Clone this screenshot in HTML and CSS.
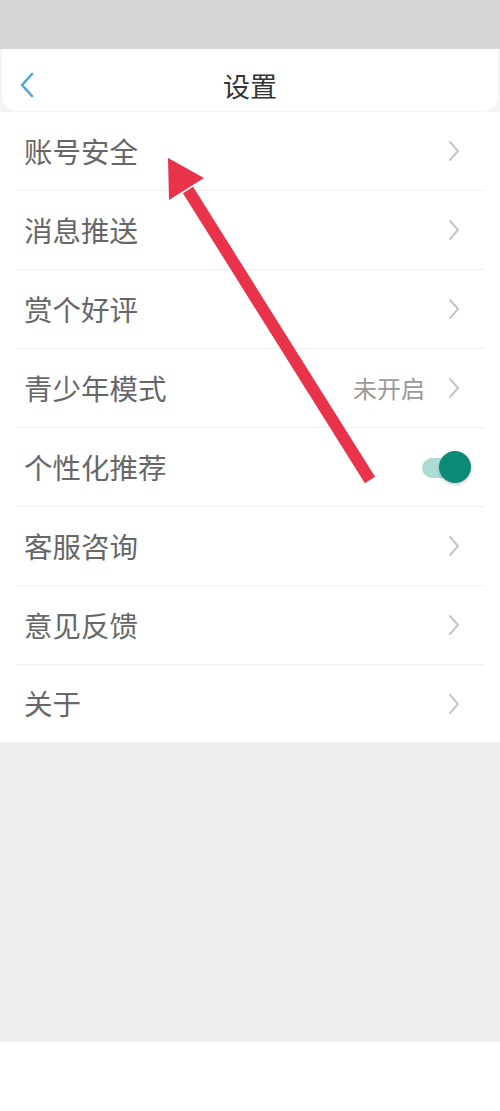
FILE: index.html
```html
<!DOCTYPE html>
<html lang="zh-CN">
<head>
<meta charset="utf-8">
<title>设置</title>
<link rel="stylesheet" href="styles.css">
</head>
<body>
<div class="page">
  <div class="status"></div>
  <div class="top-wrap">
    <header class="header">
      <div class="back">
        <svg width="16" height="26" viewBox="0 0 16 26"><polyline points="13,2 3,13 13,24" fill="none" stroke="#4ea6d6" stroke-width="2.6" stroke-linecap="round" stroke-linejoin="round"/></svg>
      </div>
      <div class="title">设置</div>
      <div></div>
    </header>
  </div>
  <ul class="list">
    <li class="row"><span class="label">账号安全</span><span class="right"><svg class="chev" width="14" height="22" viewBox="0 0 14 22"><polyline points="3,2 11,11 3,20" fill="none" stroke="#c6c6c6" stroke-width="2" stroke-linecap="round" stroke-linejoin="round"/></svg></span></li>
    <li class="row"><span class="label">消息推送</span><span class="right"><svg class="chev" width="14" height="22" viewBox="0 0 14 22"><polyline points="3,2 11,11 3,20" fill="none" stroke="#c6c6c6" stroke-width="2" stroke-linecap="round" stroke-linejoin="round"/></svg></span></li>
    <li class="row"><span class="label">赏个好评</span><span class="right"><svg class="chev" width="14" height="22" viewBox="0 0 14 22"><polyline points="3,2 11,11 3,20" fill="none" stroke="#c6c6c6" stroke-width="2" stroke-linecap="round" stroke-linejoin="round"/></svg></span></li>
    <li class="row"><span class="label">青少年模式</span><span class="right"><span class="value">未开启</span><svg class="chev" width="14" height="22" viewBox="0 0 14 22"><polyline points="3,2 11,11 3,20" fill="none" stroke="#c6c6c6" stroke-width="2" stroke-linecap="round" stroke-linejoin="round"/></svg></span></li>
    <li class="row"><span class="label">个性化推荐</span><span class="right"><span class="toggle"><span class="track"></span><span class="knob"></span></span></span></li>
    <li class="row"><span class="label">客服咨询</span><span class="right"><svg class="chev" width="14" height="22" viewBox="0 0 14 22"><polyline points="3,2 11,11 3,20" fill="none" stroke="#c6c6c6" stroke-width="2" stroke-linecap="round" stroke-linejoin="round"/></svg></span></li>
    <li class="row"><span class="label">意见反馈</span><span class="right"><svg class="chev" width="14" height="22" viewBox="0 0 14 22"><polyline points="3,2 11,11 3,20" fill="none" stroke="#c6c6c6" stroke-width="2" stroke-linecap="round" stroke-linejoin="round"/></svg></span></li>
    <li class="row last"><span class="label">关于</span><span class="right"><svg class="chev" width="14" height="22" viewBox="0 0 14 22"><polyline points="3,2 11,11 3,20" fill="none" stroke="#c6c6c6" stroke-width="2" stroke-linecap="round" stroke-linejoin="round"/></svg></span></li>
  </ul>
  <div class="filler"></div>
  <div class="bottom"></div>
  <svg class="arrow" width="500" height="1111" viewBox="0 0 500 1111">
    <line x1="370" y1="480" x2="188" y2="190" stroke="#e8334a" stroke-width="12"/>
    <polygon points="168,158 204,178 169,200" fill="#e8334a"/>
  </svg>
</div>
</body>
</html>
```

FILE: styles.css
```css
* { box-sizing: border-box; }
html, body {
  margin: 0;
  padding: 0;
  background: #ffffff;
}
body {
  font-family: "Noto Sans CJK SC", "Noto Sans", sans-serif;
  width: 500px;
  height: 1111px;
  overflow: hidden;
}
.page {
  position: relative;
  width: 500px;
  height: 1111px;
  display: flex;
  flex-direction: column;
}
.status {
  height: 49px;
  background: #d6d6d6;
  flex: none;
}
.top-wrap {
  background: #f4f4f4;
  padding: 0 2px 1px 2px;
  flex: none;
}
.header {
  height: 62px;
  padding-top: 10px;
  background: #ffffff;
  border-radius: 0 0 14px 14px;
  display: grid;
  grid-template-columns: 1fr auto 1fr;
  align-items: center;
}
.back {
  padding-left: 17px;
  display: flex;
  align-items: center;
}
.title {
  font-size: 27px;
  color: #333333;
  line-height: 1;
}
.list {
  list-style: none;
  margin: 0;
  padding: 0;
  background: #ffffff;
  flex: none;
}
.row {
  height: 79px;
  margin: 0 15px 0 16px;
  padding: 0 24px 0 8px;
  border-bottom: 1px solid #efefef;
  display: flex;
  align-items: center;
  justify-content: space-between;
}
.row.last {
  height: 77px;
  border-bottom: none;
}
.label {
  font-size: 28.5px;
  color: #676767;
  line-height: 1;
}
.right {
  display: flex;
  align-items: center;
}
.value {
  font-size: 24px;
  color: #9a9a9a;
  margin-right: 22px;
  line-height: 1;
}
.chev {
  display: block;
}
.toggle {
  position: relative;
  width: 49px;
  height: 34px;
  margin-right: -10px;
  display: block;
}
.track {
  position: absolute;
  left: 0;
  top: 8px;
  width: 36px;
  height: 20px;
  border-radius: 10px;
  background: #acdcd4;
}
.knob {
  position: absolute;
  left: 17px;
  top: 1px;
  width: 32px;
  height: 32px;
  border-radius: 50%;
  background: #0b8a75;
  box-shadow: 0 2px 3px rgba(0, 0, 0, 0.18);
}
.filler {
  height: 300px;
  background: #eeeeee;
  flex: none;
}
.bottom {
  flex: 1;
  background: #ffffff;
}
.arrow {
  position: absolute;
  left: 0;
  top: 0;
  pointer-events: none;
}
```
